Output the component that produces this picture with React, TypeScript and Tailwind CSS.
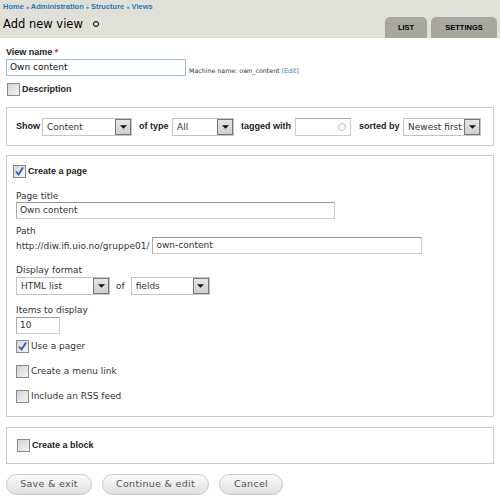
import React from 'react';

const sans = "font-['DejaVu_Sans',Verdana,sans-serif]";
const bold = "font-['Liberation_Sans',Arial,sans-serif] font-bold";

function Checkbox({ checked = false }: { checked?: boolean }) {
  return (
    <span className="relative inline-block w-[13px] h-[13px] shrink-0 border border-[#8a8a8a] bg-gradient-to-br from-[#d4d4d4] to-[#f4f4f4]">
      {checked && (
        <svg viewBox="0 0 13 13" className="absolute -left-px -top-px w-[13px] h-[13px]">
          <path d="M3 6.5 L5.5 9.5 L10 2.5" fill="none" stroke="#3a56b8" strokeWidth="1.8" />
        </svg>
      )}
    </span>
  );
}

function Select({ value, width }: { value: string; width: string }) {
  return (
    <div className={`flex shrink-0 items-stretch h-[18px] border border-[#c4c4c4] bg-white ${width}`}>
      <span className={`flex-1 pl-[4px] text-[9px] leading-[16px] font-normal text-[#333] whitespace-nowrap ${sans}`}>
        {value}
      </span>
      <span className="flex items-center justify-center w-[16px] border border-[#777] bg-gradient-to-b from-[#e6e6e6] to-[#cfcfcf]">
        <svg viewBox="0 0 8 4" className="w-[7px] h-[4px]">
          <path d="M0 0 L8 0 L4 4 Z" fill="#111" />
        </svg>
      </span>
    </div>
  );
}

function TextInput({ value, width, blue = false }: { value: string; width: string; blue?: boolean }) {
  return (
    <div
      className={`h-[17px] shrink-0 bg-white pl-[3px] text-[9px] leading-[15px] whitespace-nowrap ${sans} ${width} ${
        blue ? 'border border-[#9fbde0] text-[#111]' : 'border border-[#cccccc] border-t-[#999] border-l-[#aaa] text-[#333]'
      }`}
    >
      {value}
    </div>
  );
}

function CheckRow({ label, checked = false, strong = false, className = '' }: { label: string; checked?: boolean; strong?: boolean; className?: string }) {
  return (
    <div className={`flex items-center gap-[2px] h-[13px] ${className}`}>
      <Checkbox checked={checked} />
      <span className={`leading-[13px] whitespace-nowrap ${strong ? `${bold} text-[9px] text-[#222]` : `text-[9px] text-[#333] ${sans}`}`}>
        {label}
      </span>
    </div>
  );
}

function Button({ label, width }: { label: string; width: string }) {
  return (
    <button
      className={`h-[21px] ${width} rounded-full border border-[#c8c8c8] bg-gradient-to-b from-[#fafafa] to-[#e0e0e0] text-[9.5px] text-[#555] tracking-[0.3px] ${sans}`}
    >
      {label}
    </button>
  );
}

export default function App() {
  return (
    <div className={`w-[500px] h-[500px] bg-white ${sans} overflow-hidden`}>
      {/* Header */}
      <div className="h-[38px] bg-[#e0e0d8] flex flex-col">
        <div className={`pl-[3px] pt-[2px] text-[7.5px] text-[#2a7ab8] leading-[10px] whitespace-nowrap ${bold}`}>
          Home <span className="text-[5.5px]">»</span> Administration <span className="text-[5.5px]">»</span> Structure{' '}
          <span className="text-[5.5px]">»</span> Views
        </div>
        <div className="flex flex-1 items-end justify-between">
          <div className="flex items-center pl-[3px] pb-[6px]">
            <span className="text-[11.5px] leading-[16px] text-black">Add new view</span>
            <span className="ml-[10px] inline-block w-[6px] h-[6px] rounded-full border-[1.5px] border-black" />
          </div>
          <div className="flex items-end gap-[4px] pr-[3px]">
            <div className={`w-[42px] h-[21px] rounded-t-[5px] bg-[#a7a7a0] flex items-center justify-center text-[7.5px] text-black ${bold}`}>
              LIST
            </div>
            <div className={`w-[66px] h-[21px] rounded-t-[5px] bg-[#a7a7a0] flex items-center justify-center text-[7.5px] text-black ${bold}`}>
              SETTINGS
            </div>
          </div>
        </div>
      </div>

      {/* Body */}
      <div className="px-[6px] pt-[8px]">
        <div className={`text-[9px] text-[#222] leading-[12px] ${bold}`}>
          View name <span className="text-[#e02020]">*</span>
        </div>
        <div className="flex items-end mt-[1px]">
          <TextInput value="Own content" width="w-[180px]" blue />
          <span className="ml-[3px] mb-[1px] text-[6.3px] text-[#333] whitespace-nowrap">
            Machine name: own_content <span className="text-[#2a7ab8]">[Edit]</span>
          </span>
        </div>
        <CheckRow label="Description" strong className="mt-[7px] ml-[1px]" />

        {/* Filter fieldset */}
        <div className={`mt-[11px] h-[39px] border border-[#cccccc] flex items-center pl-[9px] text-[9px] text-[#222] whitespace-nowrap ${bold}`}>
          <span className="w-[24px]">Show</span>
          <span className="ml-[2px]">
            <Select value="Content" width="w-[90px]" />
          </span>
          <span className="ml-[7px] w-[29px]">of type</span>
          <span className="ml-[4px]">
            <Select value="All" width="w-[62px]" />
          </span>
          <span className="ml-[7px] w-[51px]">tagged with</span>
          <div className="relative ml-[3px] h-[18px] w-[56px] shrink-0 border border-[#cccccc] border-t-[#aaa] bg-white">
            <span className="absolute right-[4px] top-[4px] w-[8px] h-[8px] rounded-full border border-[#bbb]" />
          </div>
          <span className="ml-[8px] w-[42px]">sorted by</span>
          <span className="ml-[2px]">
            <Select value="Newest first" width="w-[78px]" />
          </span>
        </div>

        {/* Page fieldset */}
        <div className="mt-[9px] h-[262px] border border-[#cccccc] pl-[9px] pt-[9px] text-[9px] text-[#333]">
          <CheckRow label="Create a page" checked strong className="-ml-[3px]" />
          <div className="mt-[12px] leading-[12px]">Page title</div>
          <TextInput value="Own content" width="w-[319px]" />
          <div className="mt-[6px] leading-[12px]">Path</div>
          <div className="flex items-center h-[17px] gap-[3px]">
            <span className="leading-[12px] whitespace-nowrap">http://diw.ifi.uio.no/gruppe01/</span>
            <TextInput value="own-content" width="w-[270px]" />
          </div>
          <div className="mt-[10px] leading-[12px]">Display format</div>
          <div className="flex items-center mt-[1px] gap-[6px]">
            <Select value="HTML list" width="w-[94px]" />
            <span className="leading-[12px]">of</span>
            <Select value="fields" width="w-[79px]" />
          </div>
          <div className="mt-[9px] leading-[12px]">Items to display</div>
          <div className="mt-[1px]">
            <TextInput value="10" width="w-[44px]" />
          </div>
          <CheckRow label="Use a pager" checked className="mt-[6px]" />
          <CheckRow label="Create a menu link" className="mt-[12px]" />
          <CheckRow label="Include an RSS feed" className="mt-[12px]" />
        </div>

        {/* Block fieldset */}
        <div className="mt-[10px] h-[37px] border border-[#cccccc] pl-[10px] flex items-center">
          <CheckRow label="Create a block" strong />
        </div>

        {/* Buttons */}
        <div className="flex gap-[10px] mt-[10px]">
          <Button label="Save & exit" width="w-[86px]" />
          <Button label="Continue & edit" width="w-[107px]" />
          <Button label="Cancel" width="w-[64px]" />
        </div>
      </div>
    </div>
  );
}
